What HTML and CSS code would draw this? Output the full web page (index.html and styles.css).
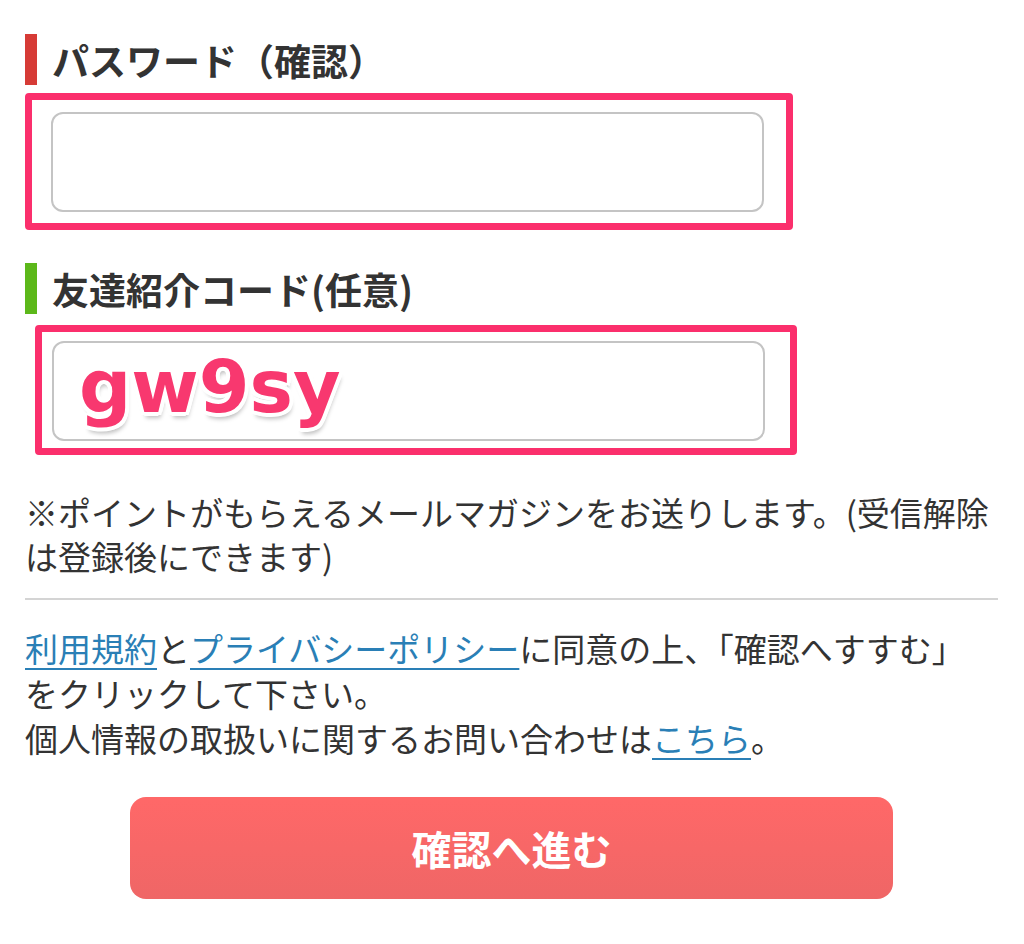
FILE: index.html
```html
<html>
    <head>
        <title>会員登録</title>
        <meta name="viewport" content="width=device-width, initial-scale=1.0">
        <link rel="stylesheet" href="styles.css">
    </head>
    <body>
        <form class="form" onsubmit="event.preventDefault()">
            <div class="field">
                <label class="field-label label-red" for="password2">パスワード（確認）</label>
                <div class="mark">
                    <input type="password" id="password2" class="text-input" />
                </div>
            </div>

            <div class="field field-next">
                <label class="field-label label-green" for="invite">友達紹介コード(任意)</label>
                <div class="mark mark-shifted">
                    <div class="input-wrap">
                        <input type="text" id="invite" class="text-input" />
                        <!-- annotation drawn over the input -->
                        <span class="code-note">gw9sy</span>
                    </div>
                </div>
            </div>

            <p class="note">※ポイントがもらえるメールマガジンをお送りします。(受信解除<br/>は登録後にできます)</p>

            <hr class="divider" />

            <p class="agree">
                <a href="#">利用規約</a>と<a href="#">プライバシーポリシー</a>に同意の上、「確認へすすむ」<br/>
                をクリックして下さい。<br/>
                個人情報の取扱いに関するお問い合わせは<a href="#">こちら</a>。
            </p>

            <div class="actions">
                <button type="submit" class="submit-button">確認へ進む</button>
            </div>
        </form>
    </body>
</html>
```

FILE: styles.css
```css
body {
    margin: 0;
    background-color: #fff;
    color: #333;
    font-family: "Noto Sans CJK JP", "Noto Sans", sans-serif;
}
.form {
    width: 973px;
    margin: 0 0 0 25px;
    padding-top: 34px;
}
.field-label {
    display: flex;
    align-items: center;
    gap: 15px;
    height: 51px;
    font-size: 37px;
    font-weight: bold;
    color: #333;
}
.field-label::before {
    content: "";
    width: 12px;
    height: 51px;
}
.label-red::before {
    background-color: #d63b36;
}
.label-green::before {
    background-color: #5cb81a;
}
.field-next {
    margin-top: 33px;
}
.mark {
    width: fit-content;
    margin-top: 8px;
    padding: 12px 22px 11px 19px;
    border: 7px solid #fb2f6c;
    border-radius: 4px;
}
.mark-shifted {
    margin: 11px 0 0 10px;
    padding: 9px 25px 7px 10px;
}
.input-wrap {
    position: relative;
}
.text-input {
    display: block;
    box-sizing: border-box;
    width: 713px;
    height: 100px;
    padding: 0 20px;
    border: solid 2px #c4c4c4;
    border-radius: 12px;
    background-color: #fff;
    font-size: 32px;
}
.code-note {
    position: absolute;
    left: 27px;
    top: 2px;
    font-family: "DejaVu Sans", sans-serif;
    font-size: 73px;
    font-weight: bold;
    line-height: 88px;
    color: #f8386f;
    text-shadow:
        4px 0 0 #fff, -4px 0 0 #fff, 0 4px 0 #fff, 0 -4px 0 #fff,
        3px 3px 0 #fff, -3px 3px 0 #fff, 3px -3px 0 #fff, -3px -3px 0 #fff,
        2px 6px 4px rgba(0, 0, 0, 0.25);
}
.note {
    margin: 35px 0 0 0;
    font-size: 33px;
    line-height: 44px;
}
.divider {
    margin: 20px 0 0 0;
    height: 2px;
    border: none;
    background-color: #d4d4d4;
}
.agree {
    margin: 26px 0 0 0;
    font-size: 33px;
    line-height: 45px;
}
.agree a {
    color: #2a7fb6;
    text-decoration: underline;
    text-decoration-thickness: 2px;
    text-underline-offset: 6px;
}
.actions {
    display: flex;
    justify-content: center;
    margin-top: 36px;
}
.submit-button {
    width: 763px;
    height: 102px;
    border: none;
    border-radius: 16px;
    background: linear-gradient(#ff6868, #ef6666);
    color: #fff;
    font-family: "Noto Sans CJK JP", sans-serif;
    font-size: 40px;
    font-weight: bold;
    cursor: pointer;
}
```
